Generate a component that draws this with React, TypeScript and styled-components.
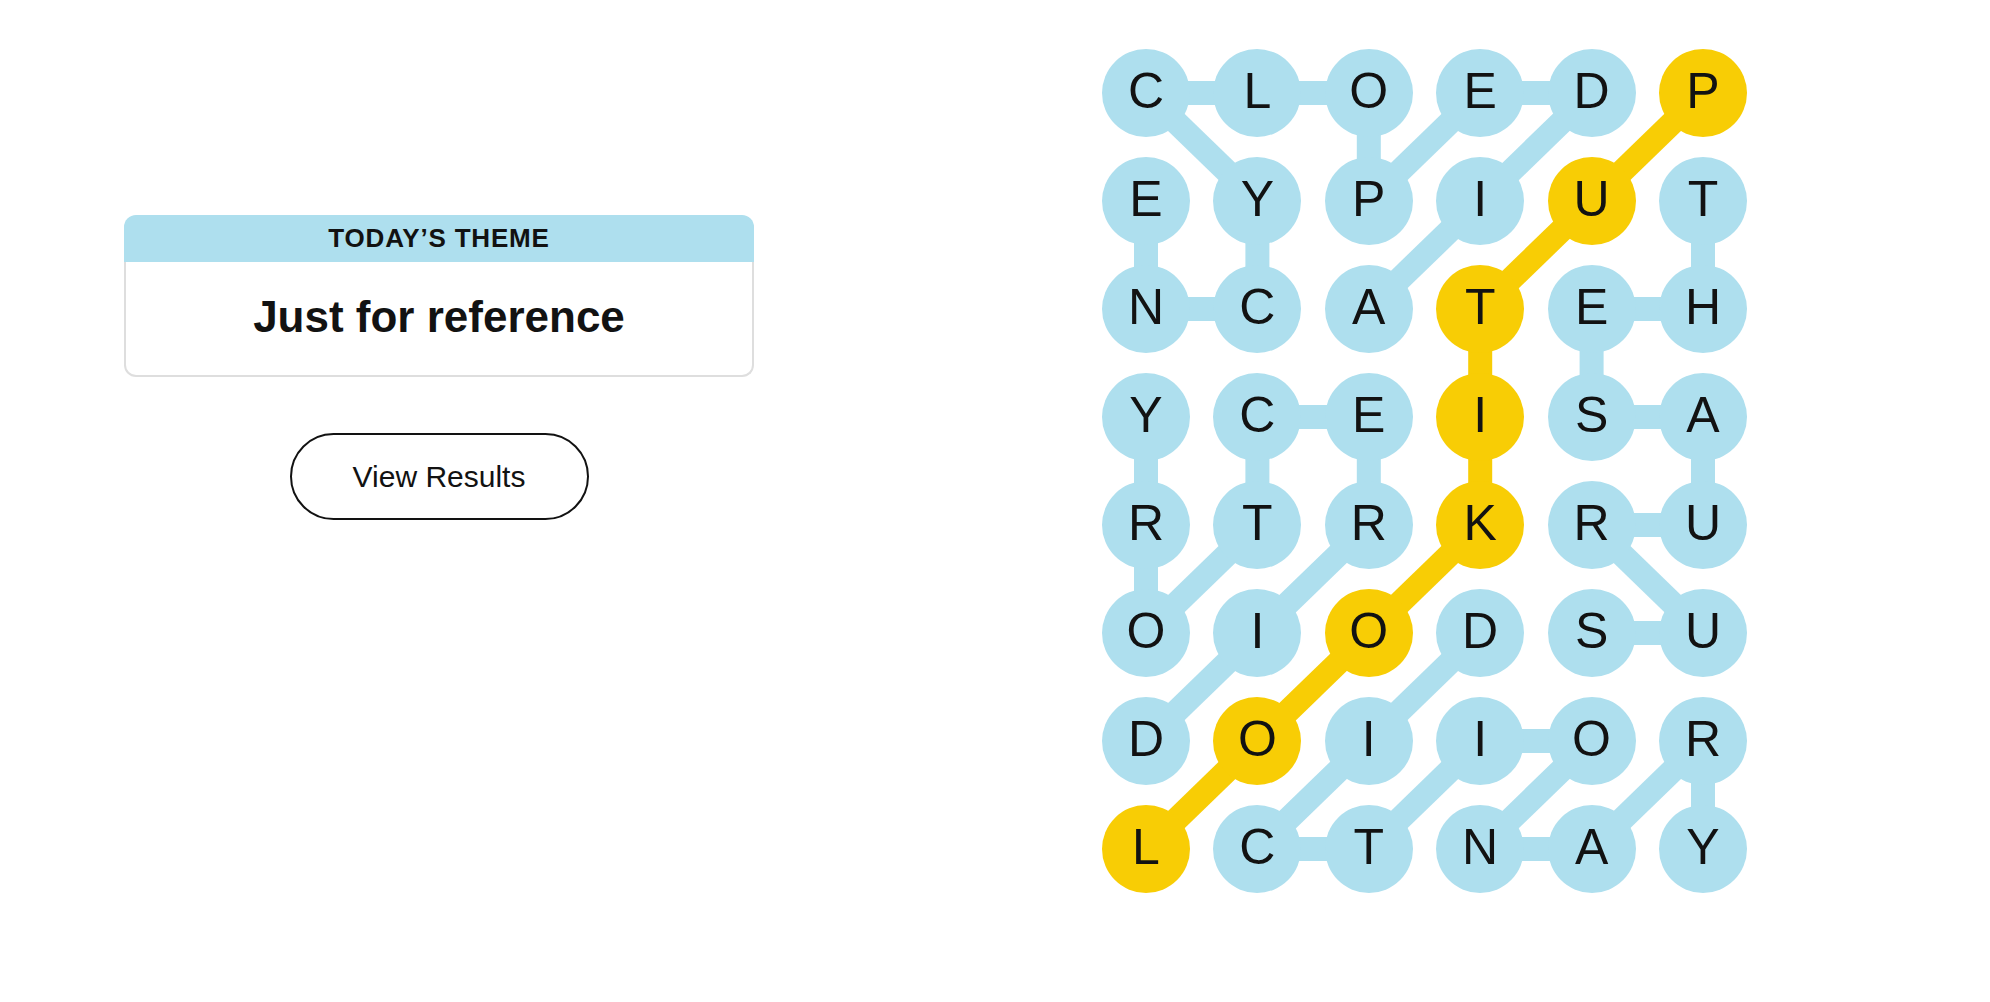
import React from 'react';
import styled, { createGlobalStyle } from 'styled-components';

const BLUE = '#aedfee';
const YELLOW = '#f8cd05';
const INK = '#121212';

const COL_STEP = 111.4;
const ROW_STEP = 108;
const DOT = 88;

const letters = [
  'CLOEDP',
  'EYPIUT',
  'NCATEH',
  'YCEISA',
  'RTRKRU',
  'OIODSU',
  'DOIIOR',
  'LCTNAY',
];

// spangram path, in order
const spangram: [number, number][] = [
  [0, 5],
  [1, 4],
  [2, 3],
  [3, 3],
  [4, 3],
  [5, 2],
  [6, 1],
  [7, 0],
];

const links: [number, number, number, number][] = [
  [0, 0, 0, 1], [0, 1, 0, 2], [0, 3, 0, 4],
  [0, 0, 1, 1], [0, 2, 1, 2], [0, 3, 1, 2], [0, 4, 1, 3],
  [1, 0, 2, 0], [1, 1, 2, 1], [1, 3, 2, 2], [1, 5, 2, 5],
  [2, 0, 2, 1], [2, 4, 2, 5], [2, 4, 3, 4],
  [3, 0, 4, 0], [3, 1, 3, 2], [3, 1, 4, 1], [3, 2, 4, 2], [3, 4, 3, 5], [3, 5, 4, 5],
  [4, 0, 5, 0], [4, 1, 5, 0], [4, 2, 5, 1], [4, 4, 4, 5], [4, 4, 5, 5],
  [5, 1, 6, 0], [5, 3, 6, 2], [5, 4, 5, 5],
  [6, 2, 7, 1], [6, 3, 7, 2], [6, 3, 6, 4], [6, 4, 7, 3], [6, 5, 7, 4], [6, 5, 7, 5],
  [7, 1, 7, 2], [7, 3, 7, 4],
];

const GlobalStyle = createGlobalStyle`
  html, body {
    margin: 0;
    padding: 0;
    background: #fff;
  }
  body {
    font-family: 'Liberation Sans', Arial, sans-serif;
    color: ${INK};
  }
`;

const Page = styled.div`
  display: flex;
  align-items: flex-start;
  padding: 49px 0 0 124px;
  width: 1990px;
  height: 1002px;
  box-sizing: border-box;
`;

const Sidebar = styled.div`
  width: 630px;
  padding-top: 166px;
  display: flex;
  flex-direction: column;
  align-items: center;
`;

const ThemeCard = styled.div`
  width: 100%;
  display: flex;
  flex-direction: column;
`;

const ThemeHeader = styled.div`
  height: 47px;
  background: ${BLUE};
  border-radius: 12px 12px 0 0;
  display: flex;
  align-items: center;
  justify-content: center;
  font-size: 26px;
  font-weight: 700;
  letter-spacing: 0.8px;
  text-transform: uppercase;
`;

const ThemeBody = styled.div`
  height: 115px;
  box-sizing: border-box;
  border: 2px solid #dedede;
  border-top: none;
  border-radius: 0 0 12px 12px;
  display: flex;
  align-items: center;
  justify-content: center;
  padding-bottom: 4px;
`;

const ThemeTitle = styled.h1`
  margin: 0;
  font-size: 44px;
  font-weight: 700;
  line-height: 1;
`;

const ResultsButton = styled.button`
  margin-top: 56px;
  width: 299px;
  height: 87px;
  border: 2px solid ${INK};
  border-radius: 44px;
  background: #fff;
  font-family: 'Liberation Sans', Arial, sans-serif;
  font-size: 30px;
  color: ${INK};
  cursor: pointer;
`;

const Board = styled.div`
  position: relative;
  margin-left: 348px;
`;

const Links = styled.svg`
  position: absolute;
  inset: 0;
  z-index: 0;
`;

const Grid = styled.div`
  position: relative;
  z-index: 1;
  display: grid;
  grid-template-columns: repeat(6, ${DOT}px);
  grid-auto-rows: ${DOT}px;
  column-gap: ${COL_STEP - DOT}px;
  row-gap: ${ROW_STEP - DOT}px;
`;

const Letter = styled.div<{ $spangram: boolean }>`
  width: ${DOT}px;
  height: ${DOT}px;
  border-radius: 50%;
  background: ${(p) => (p.$spangram ? YELLOW : BLUE)};
  display: flex;
  align-items: center;
  justify-content: center;
  padding-bottom: 4px;
  box-sizing: border-box;
  font-size: 50px;
  line-height: 1;
  color: ${INK};
`;

const cx = (c: number) => DOT / 2 + c * COL_STEP;
const cy = (r: number) => DOT / 2 + r * ROW_STEP;

const isSpangram = (r: number, c: number) =>
  spangram.some(([sr, sc]) => sr === r && sc === c);

export default function App() {
  const width = DOT + 5 * COL_STEP;
  const height = DOT + 7 * ROW_STEP;

  return (
    <>
      <GlobalStyle />
      <Page>
        <Sidebar>
          <ThemeCard>
            <ThemeHeader>Today’s Theme</ThemeHeader>
            <ThemeBody>
              <ThemeTitle>Just for reference</ThemeTitle>
            </ThemeBody>
          </ThemeCard>
          <ResultsButton>View Results</ResultsButton>
        </Sidebar>

        <Board>
          <Links width={width} height={height} viewBox={`0 0 ${width} ${height}`}>
            {links.map(([r1, c1, r2, c2]) => (
              <line
                key={`${r1}-${c1}-${r2}-${c2}`}
                x1={cx(c1)}
                y1={cy(r1)}
                x2={cx(c2)}
                y2={cy(r2)}
                stroke={BLUE}
                strokeWidth={24}
              />
            ))}
            {spangram.slice(1).map(([r, c], i) => {
              const [pr, pc] = spangram[i];
              return (
                <line
                  key={`s-${r}-${c}`}
                  x1={cx(pc)}
                  y1={cy(pr)}
                  x2={cx(c)}
                  y2={cy(r)}
                  stroke={YELLOW}
                  strokeWidth={24}
                />
              );
            })}
          </Links>
          <Grid>
            {letters.map((row, r) =>
              row.split('').map((ch, c) => (
                <Letter key={`${r}-${c}`} $spangram={isSpangram(r, c)}>
                  {ch}
                </Letter>
              ))
            )}
          </Grid>
        </Board>
      </Page>
    </>
  );
}
